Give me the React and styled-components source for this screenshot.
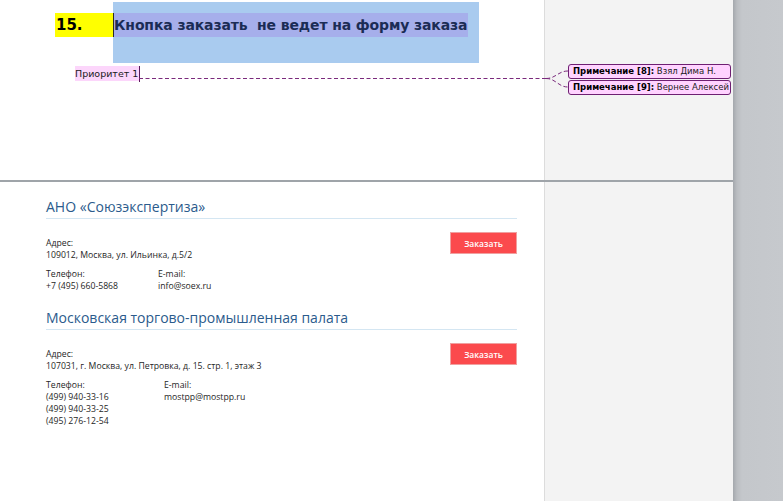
import styled, { createGlobalStyle } from "styled-components";

const GlobalStyle = createGlobalStyle`
	html, body {
		margin: 0;
		padding: 0;
		background: #c5c8cc;
	}
	* {
		box-sizing: border-box;
	}
`;

const companies = [
	{
		name: "АНО «Союзэкспертиза»",
		address: "109012, Москва, ул. Ильинка, д.5/2",
		phones: ["+7 (495) 660-5868"],
		email: "info@soex.ru",
		phoneCol: 112,
	},
	{
		name: "Московская торгово-промышленная палата",
		address: "107031, г. Москва, ул. Петровка, д. 15. стр. 1, этаж 3",
		phones: ["(499) 940-33-16", "(499) 940-33-25", "(495) 276-12-54"],
		email: "mostpp@mostpp.ru",
		phoneCol: 118,
	},
];

const comments = [
	{ id: 8, text: "Взял Дима Н." },
	{ id: 9, text: "Вернее Алексей" },
];

const App = () => {
	return (
		<>
			<GlobalStyle />
			<Screen>
				<Workspace>
					<Sheet $h={180}>
						<PageArea>
							<TitleRow>
								<NumberMark>15.</NumberMark>
								<Selection>
									<SelectedBand>Кнопка заказать&nbsp; не ведет на форму заказа</SelectedBand>
								</Selection>
							</TitleRow>
							<Priority>Приоритет 1</Priority>
						</PageArea>
						<MarginPane>
							<CommentList>
								{comments.map((c) => (
									<Balloon key={c.id}>
										<b>Примечание [{c.id}]:</b> {c.text}
									</Balloon>
								))}
							</CommentList>
						</MarginPane>
						<Connector width="733" height="180" viewBox="0 0 733 180">
							<path
								d="M139 78.5 H546 M546 78.5 C556 78.5 558 71 568 71 M546 78.5 C556 78.5 558 87 568 87"
								fill="none"
								stroke="#7a2a7c"
								strokeWidth="1"
								strokeDasharray="4 2.5"
							/>
						</Connector>
					</Sheet>
					<PageBreak />
					<Sheet $h={319}>
						<PageArea $padTop={15}>
							{companies.map((c) => (
								<Card key={c.name}>
									<CardTitle>{c.name}</CardTitle>
									<CardBody>
										<Info>
											<Field>
												<Label>Адрес:</Label>
												<Value>{c.address}</Value>
											</Field>
											<FieldRow>
												<Field $width={c.phoneCol}>
													<Label>Телефон:</Label>
													{c.phones.map((p) => (
														<Value key={p}>{p}</Value>
													))}
												</Field>
												<Field>
													<Label>E-mail:</Label>
													<Value>{c.email}</Value>
												</Field>
											</FieldRow>
										</Info>
										<OrderButton>Заказать</OrderButton>
									</CardBody>
								</Card>
							))}
						</PageArea>
						<MarginPane />
					</Sheet>
				</Workspace>
				<Gutter />
			</Screen>
		</>
	);
};

const Screen = styled.div`
	display: flex;
	width: 783px;
	height: 501px;
	overflow: hidden;
	background: #c5c8cc;
`;

const Workspace = styled.div`
	display: flex;
	flex-direction: column;
	width: 733px;
	flex-shrink: 0;
`;

const Sheet = styled.div`
	position: relative;
	display: flex;
	height: ${(p) => p.$h}px;
	flex-shrink: 0;
`;

const PageArea = styled.div`
	width: 545px;
	flex-shrink: 0;
	background: #ffffff;
	border-right: 1px solid #dcdcdc;
	padding-top: ${(p) => p.$padTop || 2}px;
	padding-left: ${(p) => (p.$padTop ? 46 : 0)}px;
`;

const MarginPane = styled.div`
	flex: 1;
	background: #f3f3f3;
`;

const PageBreak = styled.div`
	height: 2px;
	flex-shrink: 0;
	background: #9fa4a9;
`;

const Gutter = styled.div`
	flex: 1;
	background: linear-gradient(to right, #a4a8ad 0px, #babdc1 4px, #c4c7cb 9px, #c6c9cd 100%);
`;

const TitleRow = styled.div`
	display: flex;
	align-items: flex-start;
	margin-left: 55px;
	font-family: "DejaVu Sans", Tahoma, sans-serif;
	font-weight: bold;
	font-size: 14px;
	color: #1b2c55;
`;

const NumberMark = styled.div`
	width: 58px;
	height: 24px;
	margin-top: 11px;
	padding-left: 1px;
	line-height: 24px;
	background: #ffff00;
	color: #000;
	font-size: 15px;
`;

const Selection = styled.div`
	position: relative;
	width: 366px;
	height: 61px;
	padding-top: 11px;
	background: #a9cbef;

	&::before {
		content: "";
		position: absolute;
		left: 0;
		top: 11px;
		width: 1px;
		height: 24px;
		background: #2a2a2a;
	}
`;

const SelectedBand = styled.div`
	width: 355px;
	height: 24px;
	padding-left: 1px;
	line-height: 24px;
	background: #a6afeb;
	white-space: nowrap;
	letter-spacing: -0.12px;
`;

const Priority = styled.span`
	position: relative;
	display: inline-block;
	margin-left: 75px;
	height: 15px;
	padding-right: 1px;
	line-height: 15px;
	background: #fcd6fb;
	font-family: "DejaVu Sans", Tahoma, sans-serif;
	font-size: 9.5px;
	color: #1a1a1a;

	&::after {
		content: "";
		position: absolute;
		right: -1px;
		top: 0;
		width: 1px;
		height: 16px;
		background: #5a1a5c;
	}
`;

const CommentList = styled.div`
	display: flex;
	flex-direction: column;
	gap: 1px;
	padding: 64px 0 0 23px;
`;

const Balloon = styled.div`
	width: 163px;
	height: 15px;
	padding: 0 4px;
	line-height: 13px;
	border: 1px solid #6e1f72;
	border-radius: 3px;
	background: #ffd3ff;
	font-family: "DejaVu Sans", Tahoma, sans-serif;
	font-size: 8.5px;
	color: #222;
	white-space: nowrap;

	b {
		color: #000;
	}
`;

const Connector = styled.svg`
	position: absolute;
	left: 0;
	top: 0;
	pointer-events: none;
`;

const Card = styled.div`
	width: 471px;
	margin-bottom: 16px;
	font-family: "Open Sans", "Noto Sans", sans-serif;
`;

const CardTitle = styled.div`
	height: 22px;
	line-height: 20px;
	border-bottom: 1px solid #d4e6f2;
	font-size: 14px;
	color: #2b5b8c;
`;

const CardBody = styled.div`
	display: flex;
	align-items: flex-start;
	justify-content: space-between;
	margin-top: 13px;
`;

const Info = styled.div`
	display: flex;
	flex-direction: column;
	gap: 7px;
	margin-top: 5px;
`;

const FieldRow = styled.div`
	display: flex;
`;

const Field = styled.div`
	display: flex;
	flex-direction: column;
	width: ${(p) => (p.$width ? `${p.$width}px` : "auto")};
`;

const Label = styled.div`
	font-size: 8.7px;
	line-height: 12px;
	color: #262626;
`;

const Value = styled(Label)``;

const OrderButton = styled.button`
	width: 67px;
	height: 22px;
	padding: 0;
	border: 1px solid #f0a0a0;
	background: #fb4a4d;
	color: #fff;
	font-family: "Open Sans", "Noto Sans", sans-serif;
	font-size: 8.5px;
	font-weight: 600;
	cursor: pointer;
`;

export default App;
